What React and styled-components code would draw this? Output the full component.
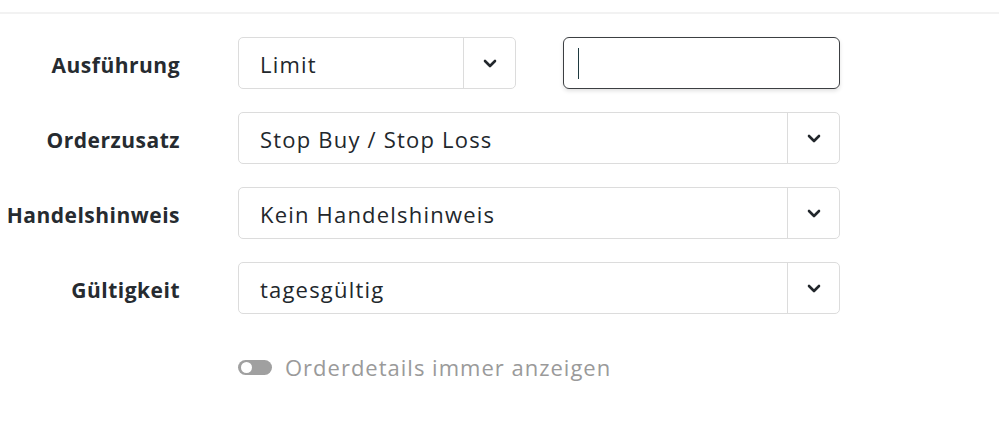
import React from 'react'
import styled, { createGlobalStyle } from 'styled-components'

const GlobalStyle = createGlobalStyle`
  body {
    margin: 0;
    background: #fff;
    font-family: "Open Sans", "Noto Sans", sans-serif;
    color: #2a2f34;
  }
`

const Page = styled.div`
  border-top: 2px solid #f2f2f2;
  margin-top: 12px;
  padding-top: 23px;
`

const Form = styled.div`
  display: grid;
  grid-template-columns: 180px 602px;
  column-gap: 58px;
  row-gap: 23px;
  align-items: center;
`

const Label = styled.label`
  text-align: right;
  font-weight: 700;
  font-size: 21px;
  letter-spacing: 0.5px;
  color: #262b30;
  white-space: nowrap;
  padding-top: 3px;
`

const Row = styled.div`
  display: flex;
  gap: 47px;
`

const SelectBox = styled.div`
  display: flex;
  align-items: stretch;
  height: 52px;
  box-sizing: border-box;
  width: ${p => p.$width || '602px'};
  border: 1px solid #dcdcdc;
  border-radius: 5px;
  background: #fff;
`

const Value = styled.div`
  flex: 1;
  display: flex;
  align-items: center;
  padding: 2px 0 0 21px;
  font-size: 22px;
  letter-spacing: 1.2px;
  color: #22272c;
`

const Toggle = styled.div`
  width: 51px;
  border-left: 1px solid #dcdcdc;
  display: flex;
  align-items: center;
  justify-content: center;
`

const Input = styled.div`
  width: 277px;
  height: 52px;
  box-sizing: border-box;
  border: 1.5px solid #3c3f42;
  border-radius: 6px;
  box-shadow: 0 2px 4px rgba(0, 0, 0, 0.12);
  display: flex;
  align-items: center;
  padding-left: 14px;
`

const Caret = styled.span`
  width: 1px;
  height: 31px;
  background: #1f3a40;
`

const SwitchRow = styled.div`
  grid-column: 2;
  display: flex;
  align-items: center;
  gap: 13px;
  margin-top: 15px;
  color: #9a9a9a;
  font-size: 22px;
  letter-spacing: 1px;
`

const Switch = styled.span`
  width: 34px;
  height: 15px;
  border-radius: 8px;
  background: #a0a0a0;
  display: flex;
  align-items: center;
  padding-left: 3px;
  box-sizing: border-box;

  &::before {
    content: '';
    width: 11px;
    height: 11px;
    border-radius: 50%;
    background: #fff;
  }
`

const Chevron = () => (
  <svg width="14" height="9" viewBox="0 0 14 9">
    <path d="M2 2 L7 7 L12 2" fill="none" stroke="#22272c" strokeWidth="2.6" strokeLinecap="round" strokeLinejoin="round" />
  </svg>
)

const Select = ({ value, width }) => (
  <SelectBox $width={width}>
    <Value>{value}</Value>
    <Toggle><Chevron /></Toggle>
  </SelectBox>
)

export default function App() {
  return (
    <>
      <GlobalStyle />
      <Page>
        <Form>
          <Label>Ausführung</Label>
          <Row>
            <Select value="Limit" width="278px" />
            <Input><Caret /></Input>
          </Row>

          <Label>Orderzusatz</Label>
          <Select value="Stop Buy / Stop Loss" />

          <Label>Handelshinweis</Label>
          <Select value="Kein Handelshinweis" />

          <Label>Gültigkeit</Label>
          <Select value="tagesgültig" />

          <SwitchRow>
            <Switch />
            Orderdetails immer anzeigen
          </SwitchRow>
        </Form>
      </Page>
    </>
  )
}
